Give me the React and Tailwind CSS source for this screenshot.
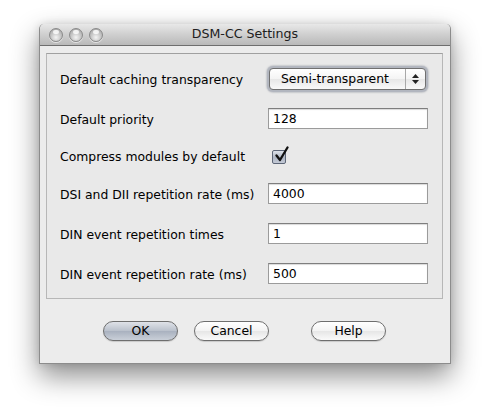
import React from "react";

const font = { fontFamily: '"DejaVu Sans", "Lucida Grande", sans-serif' };

function Light() {
  return (
    <div className="w-[14px] h-[14px] rounded-full border border-[#8a8a8a] bg-[radial-gradient(circle_at_50%_70%,#f4f4f4_0%,#c9c9c9_45%,#9c9c9c_100%)] relative shadow-[0_1px_0_rgba(255,255,255,0.6)]">
      <div className="absolute left-[3px] top-[1px] w-[6px] h-[4px] rounded-full bg-white/80" />
    </div>
  );
}

function TextField({ value }) {
  return (
    <div className="w-[160px] h-[21px] bg-white border border-[#9b9b9b] border-t-[#7e7e7e] shadow-[inset_0_1px_1px_rgba(0,0,0,0.15)] flex items-center pl-[4px] pt-[1px] text-[12.4px] text-black">
      {value}
    </div>
  );
}

function Row({ label, children, className }) {
  return (
    <div className={"flex items-center " + className}>
      <div className="w-[221px] pl-[13px] pt-[3px] text-[12.4px] text-black whitespace-nowrap">{label}</div>
      {children}
    </div>
  );
}

function Button({ children, primary, className }) {
  return (
    <div
      className={
        "h-[20px] rounded-full border border-[#6e6e6e] flex items-center justify-center text-[12.4px] text-black shadow-[0_1px_1px_rgba(0,0,0,0.15)] " +
        (primary
          ? "bg-[linear-gradient(#dfe2e8,#b9c0cb_50%,#a9b1bf_51%,#c9cfd8)] "
          : "bg-[linear-gradient(#ffffff,#f3f3f3_50%,#e6e6e6_51%,#fafafa)] ") +
        className
      }
    >
      {children}
    </div>
  );
}

export default function App() {
  return (
    <div className="w-[490px] h-[419px] bg-white overflow-hidden pl-[39px] pt-[24px]" style={font}>
      <div className="w-[412px] h-[340px] bg-[#ececec] rounded-t-[5px] border border-[#8c8c8c] border-t-0 shadow-[0_12px_28px_rgba(0,0,0,0.45),0_0_8px_rgba(0,0,0,0.12)] flex flex-col">
        <div className="h-[22px] rounded-t-[5px] bg-[linear-gradient(#e8e8e8,#cfcfcf_50%,#b9b9b9)] border-b border-[#6e6e6e] flex items-center relative">
          <div className="flex gap-[6px] pl-[9px]">
            <Light />
            <Light />
            <Light />
          </div>
          <div className="absolute inset-0 flex items-center justify-center text-[12.6px] text-[#202020]">DSM-CC Settings</div>
        </div>
        <div className="flex-1 flex flex-col pt-[7px] pl-[6px] pr-[7px]">
          <div className="h-[246px] border border-[#b7b7b7] border-t-[#a0a0a0] bg-[#e9e9e9] flex flex-col">
            <Row label="Default caching transparency" className="mt-[12px] h-[26px]">
              <div className="w-[161px] h-[26px] rounded-[6px] p-[2px] bg-[#8d95a3]/60 shadow-[0_0_2px_rgba(60,70,90,0.6)] -ml-[1px]">
                <div className="w-full h-full rounded-[4px] border border-[#707070] bg-[linear-gradient(#ffffff,#f4f4f4_50%,#e7e7e7_51%,#f9f9f9)] flex items-center">
                  <div className="flex-1 pl-[11px] pt-[1px] text-[12.4px] text-black">Semi-transparent</div>
                  <div className="w-[20px] h-full border-l border-[#a8a8a8] flex flex-col items-center justify-center gap-[2px]">
                    <svg width="7" height="4" viewBox="0 0 7 4"><path d="M3.5 0 L7 4 L0 4 Z" fill="#222" /></svg>
                    <svg width="7" height="4" viewBox="0 0 7 4"><path d="M0 0 L7 0 L3.5 4 Z" fill="#222" /></svg>
                  </div>
                </div>
              </div>
            </Row>
            <Row label="Default priority" className="mt-[16px] h-[21px]">
              <TextField value="128" />
            </Row>
            <Row label="Compress modules by default" className="mt-[16px] h-[22px]">
              <div className="relative ml-[4px] mt-[2px] w-[14px] h-[14px] rounded-[2px] border border-[#5d6677] bg-[linear-gradient(#dfe3ea,#aeb6c4_55%,#c4cad6)]">
                <svg className="absolute -top-[5px] left-[1px]" width="15" height="17" viewBox="0 0 15 17">
                  <path d="M2.5 9.5 L6 14 L13.5 1.5" fill="none" stroke="#111" strokeWidth="2.3" strokeLinecap="round" strokeLinejoin="round" />
                </svg>
              </div>
            </Row>
            <Row label="DSI and DII repetition rate (ms)" className="mt-[16px] h-[21px]">
              <TextField value="4000" />
            </Row>
            <Row label="DIN event repetition times" className="mt-[19px] h-[21px]">
              <TextField value="1" />
            </Row>
            <Row label="DIN event repetition rate (ms)" className="mt-[19px] h-[21px]">
              <TextField value="500" />
            </Row>
          </div>
          <div className="flex mt-[22px] pl-[57px]">
            <Button primary className="w-[75px]">OK</Button>
            <Button className="w-[75px] ml-[16px]">Cancel</Button>
            <Button className="w-[75px] ml-[42px]">Help</Button>
          </div>
        </div>
      </div>
    </div>
  );
}
